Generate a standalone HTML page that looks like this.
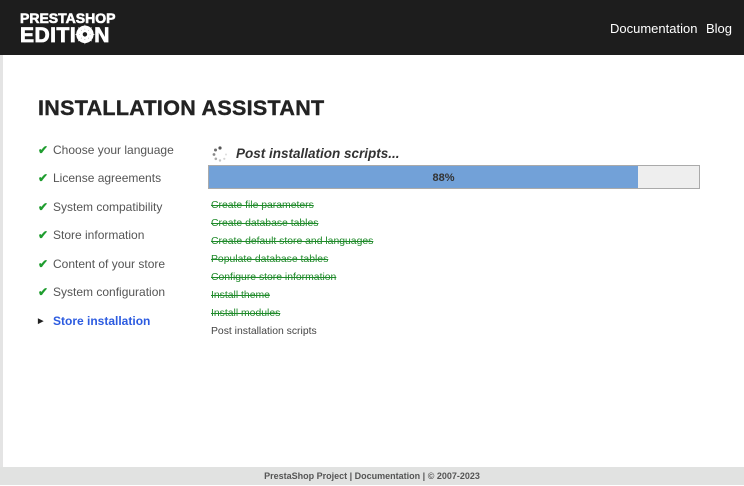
<!DOCTYPE html>
<html><head><meta charset="utf-8"><style>
*{margin:0;padding:0;box-sizing:border-box}
body{width:744px;height:485px;overflow:hidden;font-family:"Liberation Sans",sans-serif;background:#fff;position:relative}
.hdr{position:absolute;left:0;top:0;width:744px;height:55px;background:#1d1d1d}
.logo{position:absolute;left:20px;top:11px;color:#fff;font-weight:900;line-height:1}
.logo .a{font-size:14px;letter-spacing:0;-webkit-text-stroke:0.6px #fff}
.logo .b{font-size:21px;letter-spacing:0.5px;margin-top:0;-webkit-text-stroke:0.8px #fff}
.nav{position:absolute;top:21px;color:#fff;font-size:13px}
.lb{position:absolute;left:0;top:55px;width:3px;height:412px;background:#e4e4e4}
h1{position:absolute;left:38px;top:96px;font-size:21.5px;font-weight:bold;color:#222;letter-spacing:0.3px;-webkit-text-stroke:0.4px #222}
.side{position:absolute;left:38px;font-size:12px;color:#555}
.side .c{color:#1f9d2f;font-weight:bold;display:inline-block;width:15px}
.cur{color:#2c5be0;font-weight:bold}
.ttl{position:absolute;left:236px;top:146px;font-size:13.5px;font-weight:bold;font-style:italic;color:#333}
.bar{position:absolute;left:208px;top:165px;width:492px;height:24px;border:1px solid #aaa;background:#eee}
.fill{position:absolute;left:0;top:0;width:429px;height:22px;background:#72a1d8;text-align:center;font-size:11px;font-weight:bold;line-height:24px;color:#333;padding-left:40px}
.st{position:absolute;left:211px;font-size:10.4px;color:#1f8a2a;text-decoration:line-through}
.ft{position:absolute;left:0;top:467px;width:744px;height:18px;background:#e1e2e1;text-align:center;font-size:9px;font-weight:bold;color:#555;line-height:19px}
</style></head><body>
<div class="hdr">
<div class="logo"><div class="a">PRESTASHOP</div><div class="b">EDITI&#x2742;N</div></div>
<div class="nav" style="left:610px">Documentation</div>
<div class="nav" style="left:706px">Blog</div>
</div>
<div class="lb"></div>
<h1>INSTALLATION ASSISTANT</h1>
<div class="side" style="top:143px"><span class="c">✔</span>Choose your language</div>
<div class="side" style="top:171px"><span class="c">✔</span>License agreements</div>
<div class="side" style="top:200px"><span class="c">✔</span>System compatibility</div>
<div class="side" style="top:228px"><span class="c">✔</span>Store information</div>
<div class="side" style="top:257px"><span class="c">✔</span>Content of your store</div>
<div class="side" style="top:285px"><span class="c">✔</span>System configuration</div>
<div class="side cur" style="top:314px"><span style="display:inline-block;width:15px;font-size:7px;color:#222;vertical-align:2px">▶</span>Store installation</div>
<svg style="position:absolute;left:211px;top:145px" width="18" height="18" viewBox="0 0 18 18">
<g fill="#555"><circle cx="9" cy="3" r="1.6"/><circle cx="4.5" cy="5" r="1.5" opacity=".85"/><circle cx="3" cy="9.5" r="1.4" opacity=".7"/><circle cx="4.8" cy="13.8" r="1.3" opacity=".5"/><circle cx="9" cy="15.5" r="1.2" opacity=".35"/><circle cx="13.3" cy="13.8" r="1.1" opacity=".25"/><circle cx="15" cy="9.5" r="1" opacity=".2"/></g></svg>
<div class="ttl">Post installation scripts...</div>
<div class="bar"><div class="fill">88%</div></div>
<div class="st" style="top:200px">Create file parameters</div>
<div class="st" style="top:218px">Create database tables</div>
<div class="st" style="top:236px">Create default store and languages</div>
<div class="st" style="top:254px">Populate database tables</div>
<div class="st" style="top:272px">Configure store information</div>
<div class="st" style="top:290px">Install theme</div>
<div class="st" style="top:308px">Install modules</div>
<div class="st" style="top:326px;color:#444;text-decoration:none">Post installation scripts</div>
<div class="ft">PrestaShop Project | Documentation | © 2007-2023</div>
</body></html>
